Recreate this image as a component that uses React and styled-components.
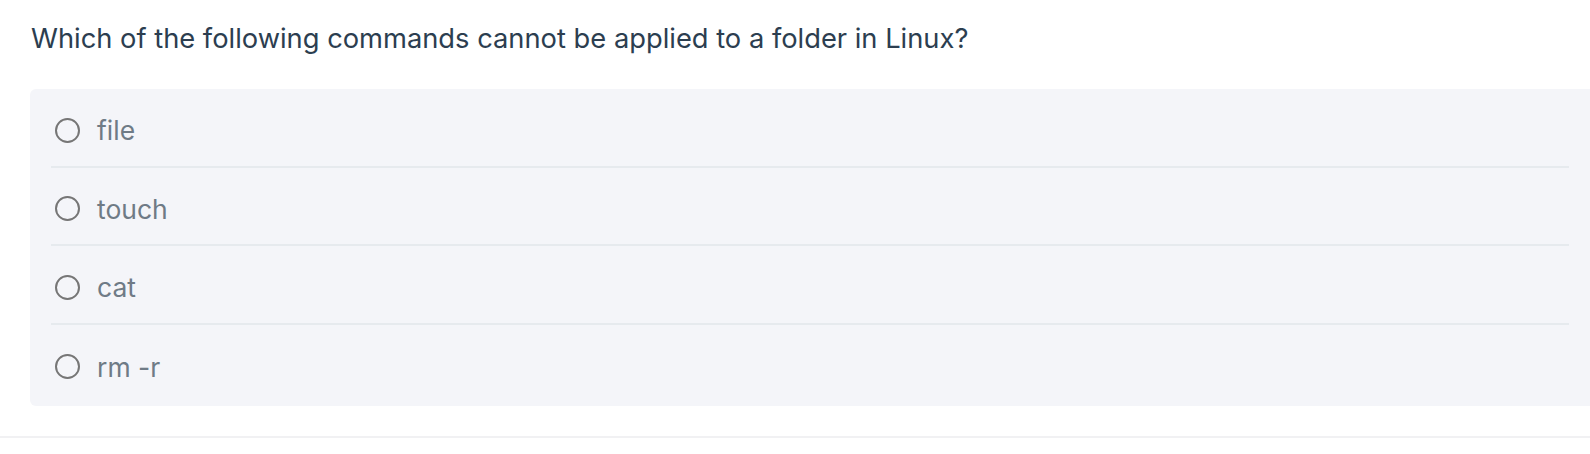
import styled, { createGlobalStyle } from "styled-components";

const GlobalStyle = createGlobalStyle`
  body {
    margin: 0;
    background: #ffffff;
    font-family: Inter, "Noto Sans", sans-serif;
  }
`;

const QuestionWrapper = styled.div`
  padding: 22px 0 30px 30px;
  border-bottom: 2px solid #f1f1f3;
`;

const QuestionText = styled.h2`
  margin: 0 0 33px 1px;
  font-size: 27.3px;
  line-height: 34px;
  font-weight: 400;
  color: #2c3e50;
`;

const OptionsPanel = styled.div`
  background-color: #f4f5f9;
  border-radius: 6px 0 0 6px;
  padding: 0 21px 3px 21px;
`;

const OptionRow = styled.label`
  display: flex;
  align-items: center;
  gap: 17px;
  height: 78.5px;
  padding: 6px 0 0 4px;
  box-sizing: border-box;
  border-bottom: ${(p) => (p.$last ? "none" : "2px solid #e6eaee")};
  cursor: pointer;
`;

const RadioCircle = styled.span`
  width: 21px;
  height: 21px;
  border: 2px solid #767676;
  border-radius: 50%;
  flex: 0 0 auto;
  background: transparent;
`;

const OptionText = styled.span`
  font-size: 26.5px;
  color: #6f7b86;
`;

const options = ["file", "touch", "cat", "rm -r"];

const App = () => {
  return (
    <>
      <GlobalStyle />
      <QuestionWrapper>
        <QuestionText>
          Which of the following commands cannot be applied to a folder in Linux?
        </QuestionText>
        <OptionsPanel>
          {options.map((option, i) => (
            <OptionRow key={option} $last={i === options.length - 1}>
              <RadioCircle />
              <OptionText>{option}</OptionText>
            </OptionRow>
          ))}
        </OptionsPanel>
      </QuestionWrapper>
    </>
  );
};

export default App;
